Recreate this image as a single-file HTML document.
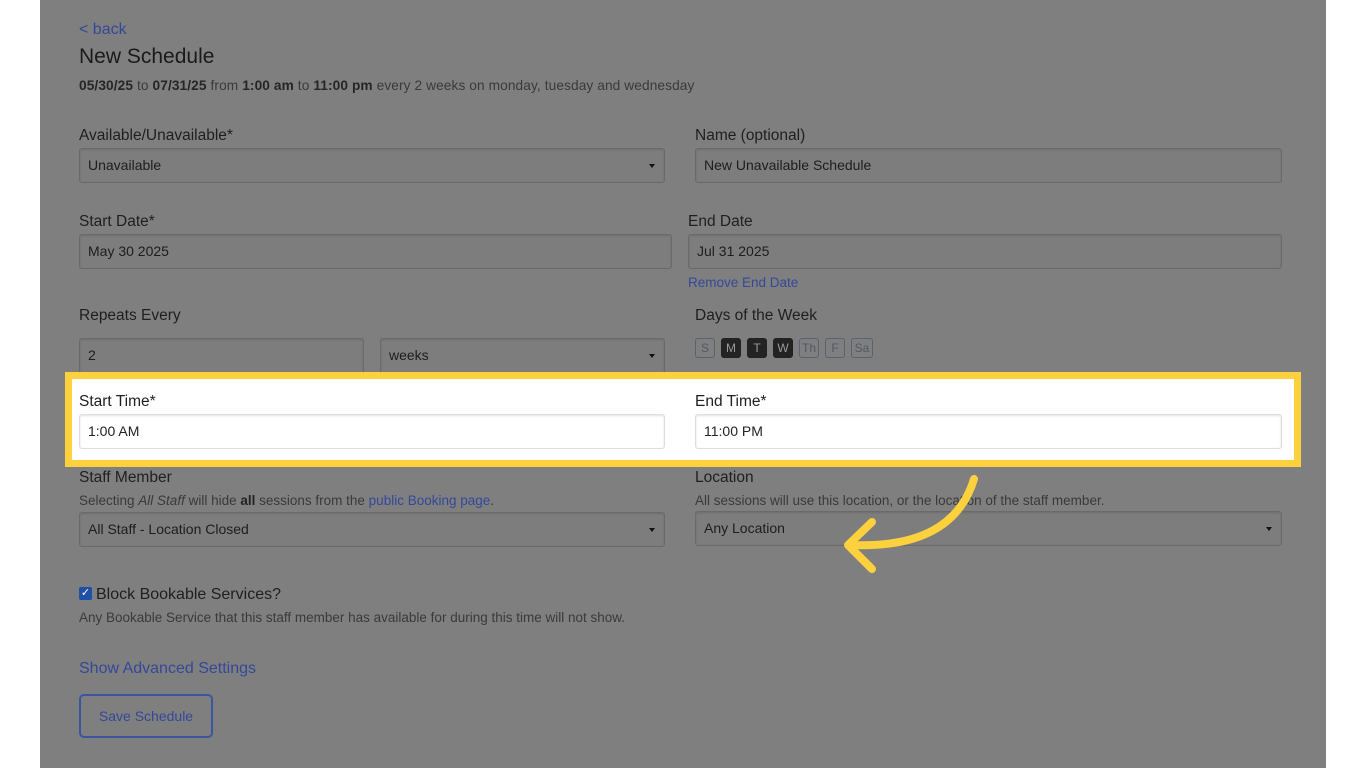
<!DOCTYPE html>
<html><head><meta charset="utf-8"><style>
body{margin:0;width:1366px;height:768px;background:#fff;font-family:"Liberation Sans",Arial,sans-serif;position:relative;overflow:hidden}
.pg{position:absolute;left:40px;top:0;width:1286px;height:768px;background:#7f7f7f}
.a{position:absolute;white-space:nowrap}
.lbl{font-size:15.5px;color:#1f1f1f}
.in{position:absolute;height:33px;border:1px solid #6a6a6a;border-radius:3px;background:#7d7d7d;box-sizing:border-box;font-size:14px;color:#1d1d1d;padding-left:8px;line-height:33px;box-shadow:inset 0 1px 2px rgba(0,0,0,.12)}
.in.w{background:#fff;border-color:#ddd;color:#222}
.car{position:absolute;right:9px;top:15px;border-left:3px solid transparent;border-right:3px solid transparent;border-top:4px solid #111}
.lnk{color:#34489a}
.sm{font-size:13.5px;color:#3a3a3a}
.d{position:absolute;top:338px;width:20px;height:20px;box-sizing:border-box;border:1px solid #566472;border-radius:3px;font-size:12px;text-align:center;line-height:19px;color:#4d5a66}
.d.on{background:#232323;color:#9a9a9a;border-color:#222}
</style></head><body>
<div class="pg"></div>
<div class="a lnk" style="left:79px;top:21px;font-size:16px">&lt; back</div>
<div class="a" style="left:79px;top:45px;font-size:21px;color:#1a1a1a">New Schedule</div>
<div class="a sm" style="left:79px;top:78px;font-size:13.7px;letter-spacing:0.1px"><b style="color:#262626">05/30/25</b> to <b style="color:#262626">07/31/25</b> from <b style="color:#262626">1:00 am</b> to <b style="color:#262626">11:00 pm</b> every 2 weeks on monday, tuesday and wednesday</div>

<div class="a lbl" style="left:79px;top:127px">Available/Unavailable*</div>
<div class="in" style="left:79px;top:148px;width:586px;height:35px">Unavailable<span class="car"></span></div>
<div class="a lbl" style="left:695px;top:127px">Name (optional)</div>
<div class="in" style="left:695px;top:148px;width:587px;height:35px">New Unavailable Schedule</div>

<div class="a lbl" style="left:79px;top:213px">Start Date*</div>
<div class="in" style="left:79px;top:234px;width:593px;height:35px">May 30 2025</div>
<div class="a lbl" style="left:688px;top:213px">End Date</div>
<div class="in" style="left:688px;top:234px;width:594px;height:35px">Jul 31 2025</div>
<div class="a lnk" style="left:688px;top:275px;font-size:13.5px">Remove End Date</div>

<div class="a lbl" style="left:79px;top:307px">Repeats Every</div>
<div class="in" style="left:79px;top:338px;width:285px;height:36px">2</div>
<div class="in" style="left:380px;top:338px;width:285px;height:36px">weeks<span class="car"></span></div>
<div class="a lbl" style="left:695px;top:307px">Days of the Week</div>
<div class="d" style="left:695px">S</div><div class="d on" style="left:721px">M</div><div class="d on" style="left:747px">T</div><div class="d on" style="left:773px">W</div><div class="d" style="left:799px">Th</div><div class="d" style="left:825px">F</div><div class="d" style="left:851px;width:22px">Sa</div>

<div class="a" style="left:65px;top:372px;width:1236px;height:95px;box-sizing:border-box;border:7px solid #fdd03d;background:#fff"></div>
<div class="a lbl" style="left:79px;top:393px">Start Time*</div>
<div class="in w" style="left:79px;top:414px;width:586px;height:35px">1:00 AM</div>
<div class="a lbl" style="left:695px;top:393px">End Time*</div>
<div class="in w" style="left:695px;top:414px;width:587px;height:35px">11:00 PM</div>

<div class="a lbl" style="left:79px;top:469px">Staff Member</div>
<div class="a sm" style="left:79px;top:493px">Selecting <i>All Staff</i> will hide <b style="color:#222">all</b> sessions from the <span class="lnk">public Booking page</span>.</div>
<div class="in" style="left:79px;top:512px;width:586px;height:35px">All Staff - Location Closed<span class="car"></span></div>
<div class="a lbl" style="left:695px;top:469px">Location</div>
<div class="a sm" style="left:695px;top:493px">All sessions will use this location, or the location of the staff member.</div>
<div class="in" style="left:695px;top:511px;width:587px;height:35px">Any Location<span class="car"></span></div>

<svg class="a" style="left:0;top:0" width="1366" height="768"><g fill="none" stroke="#fdd03d" stroke-width="8" stroke-linecap="round" stroke-linejoin="round"><path d="M974 479 C960 525 920 548 850 545"/><path d="M872 522 L848 545 L872 569"/></g></svg>

<div class="a" style="left:79px;top:587px;width:13px;height:13px;background:#1f4fa8;border-radius:2px;color:#fff;font-size:11px;line-height:13px;text-align:center">✓</div>
<div class="a" style="left:96px;top:586px;font-size:16px;color:#1f1f1f">Block Bookable Services?</div>
<div class="a sm" style="left:79px;top:610px">Any Bookable Service that this staff member has available for during this time will not show.</div>
<div class="a lnk" style="left:79px;top:660px;font-size:16px">Show Advanced Settings</div>
<div class="a lnk" style="left:79px;top:694px;width:134px;height:44px;box-sizing:border-box;border:2px solid #3a56a0;border-radius:5px;font-size:14px;text-align:center;line-height:40px">Save Schedule</div>
</body></html>
